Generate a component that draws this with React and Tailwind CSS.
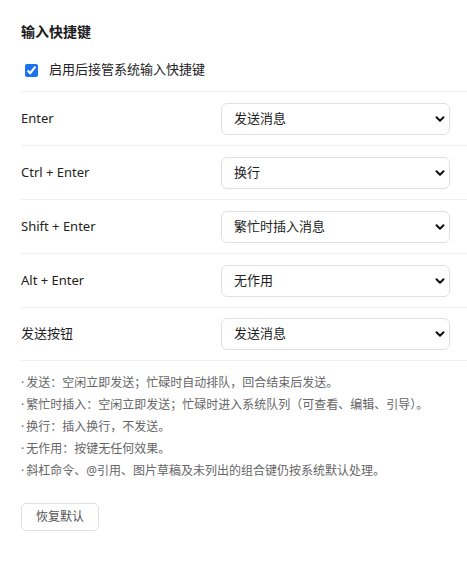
import React, { useState } from 'react';

const font = { fontFamily: '"Noto Sans", "Noto Sans CJK SC", sans-serif' };

const OPTIONS = ['发送消息', '换行', '繁忙时插入消息', '无作用'];

const rows = [
  { key: 'Enter', value: '发送消息' },
  { key: 'Ctrl + Enter', value: '换行' },
  { key: 'Shift + Enter', value: '繁忙时插入消息' },
  { key: 'Alt + Enter', value: '无作用' },
  { key: '发送按钮', value: '发送消息' },
];

const hints = [
  '发送：空闲立即发送；忙碌时自动排队，回合结束后发送。',
  '繁忙时插入：空闲立即发送；忙碌时进入系统队列（可查看、编辑、引导）。',
  '换行：插入换行，不发送。',
  '无作用：按键无任何效果。',
  '斜杠命令、@引用、图片草稿及未列出的组合键仍按系统默认处理。',
];

const Chevron = () => (
  <svg width="10" height="10" viewBox="0 0 10 10" className="pointer-events-none absolute right-[5px] top-1/2 -translate-y-1/2">
    <path d="M1.5 3.2 L5 6.7 L8.5 3.2" fill="none" stroke="#111" strokeWidth="2" strokeLinecap="round" strokeLinejoin="round" />
  </svg>
);

const ShortcutRow = ({ label, value, onChange, last }) => (
  <div className={`flex items-center justify-between h-[54px] pr-[17px] border-t border-[#f0f0f0] ${last ? 'border-b' : ''}`}>
    <span className="text-[13px] text-[#222]">{label}</span>
    <div className="relative w-[229px]">
      <select
        value={value}
        onChange={(e) => onChange(e.target.value)}
        className="w-full h-[32px] appearance-none rounded-[6px] border border-[#e0e0e0] bg-white pl-[12px] text-[13px] text-[#222] outline-none"
        style={font}
      >
        {OPTIONS.map((o) => (
          <option key={o} value={o}>{o}</option>
        ))}
      </select>
      <Chevron />
    </div>
  </div>
);

export default function App() {
  const [enabled, setEnabled] = useState(true);
  const [values, setValues] = useState(rows.map((r) => r.value));

  return (
    <div className="min-h-[571px] bg-white pl-[21px] pt-[22px]" style={font}>
      <h2 className="text-[14px] font-bold text-[#1a1a1a] leading-[20px]">输入快捷键</h2>

      <label className="mt-[18px] flex items-center h-[20px] pl-[4px]">
        <input
          type="checkbox"
          checked={enabled}
          onChange={(e) => setEnabled(e.target.checked)}
          className="w-[13px] h-[13px] accent-[#1a73e8] m-0"
        />
        <span className="ml-[11px] text-[13px] text-[#222]">启用后接管系统输入快捷键</span>
      </label>

      <div className="mt-[11px]">
        {rows.map((r, i) => (
          <ShortcutRow
            key={r.key}
            label={r.key}
            value={values[i]}
            last={i === rows.length - 1}
            onChange={(v) => setValues(values.map((x, j) => (j === i ? v : x)))}
          />
        ))}
      </div>

      <ul className="mt-[11px] text-[12px] text-[#666] leading-[22px]">
        {hints.map((h) => (
          <li key={h}>
            <span className="mr-[2px]">·</span>
            {h}
          </li>
        ))}
      </ul>

      <button className="mt-[21px] h-[28px] px-[14px] rounded-[5px] border border-[#e0e0e0] bg-white text-[12px] text-[#555]">
        恢复默认
      </button>
    </div>
  );
}
